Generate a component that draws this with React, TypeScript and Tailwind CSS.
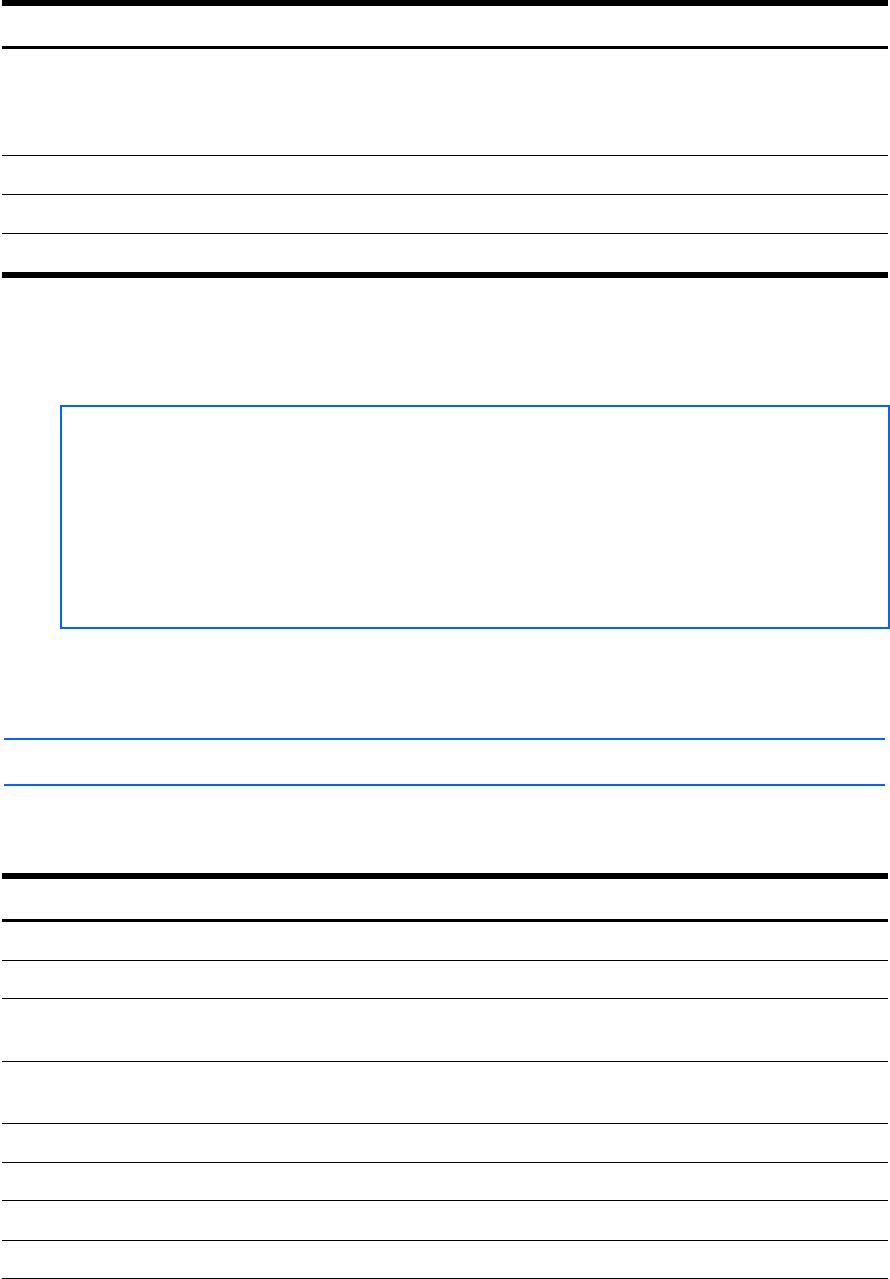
type Row = { h: string };

// heights already include the 1px rule at the bottom of each row
const lowerRows = [
  "h-[39px]",
  "h-[38px]",
  "h-[63px]",
  "h-[62px]",
  "h-[39px]",
  "h-[38px]",
  "h-[40px]",
  "h-[38px]",
];

function RuleRow({ h }: Row) {
  return <div className={`${h} border-b border-black`} />;
}

export default function App() {
  return (
    <div className="w-[890px] h-[1279px] bg-white overflow-hidden font-['Liberation_Sans',sans-serif]">
      {/* Top table */}
      <div className="mx-[2px] border-t-[6px] border-black">
        <div className="h-[43px] border-b-[3px] border-black" />
        <RuleRow h="h-[107px]" />
        <RuleRow h="h-[39px]" />
        <RuleRow h="h-[39px]" />
        <div className="h-[44px] border-b-[6px] border-black" />
      </div>

      {/* Blue frame */}
      <div className="mt-[127px] ml-[60px] h-[224px] border-2 border-[#0066ff]" />

      {/* Blue rules */}
      <div className="mt-[109px] ml-[4px] mr-[5px] h-[48px] border-y-2 border-[#0066ff]" />

      {/* Lower table */}
      <div className="mt-[87px] mx-[2px] border-t-[6px] border-black">
        <div className="h-[43px] border-b-[3px] border-black" />
        {lowerRows.map((h, i) => (
          <RuleRow key={i} h={h} />
        ))}
      </div>
    </div>
  );
}
